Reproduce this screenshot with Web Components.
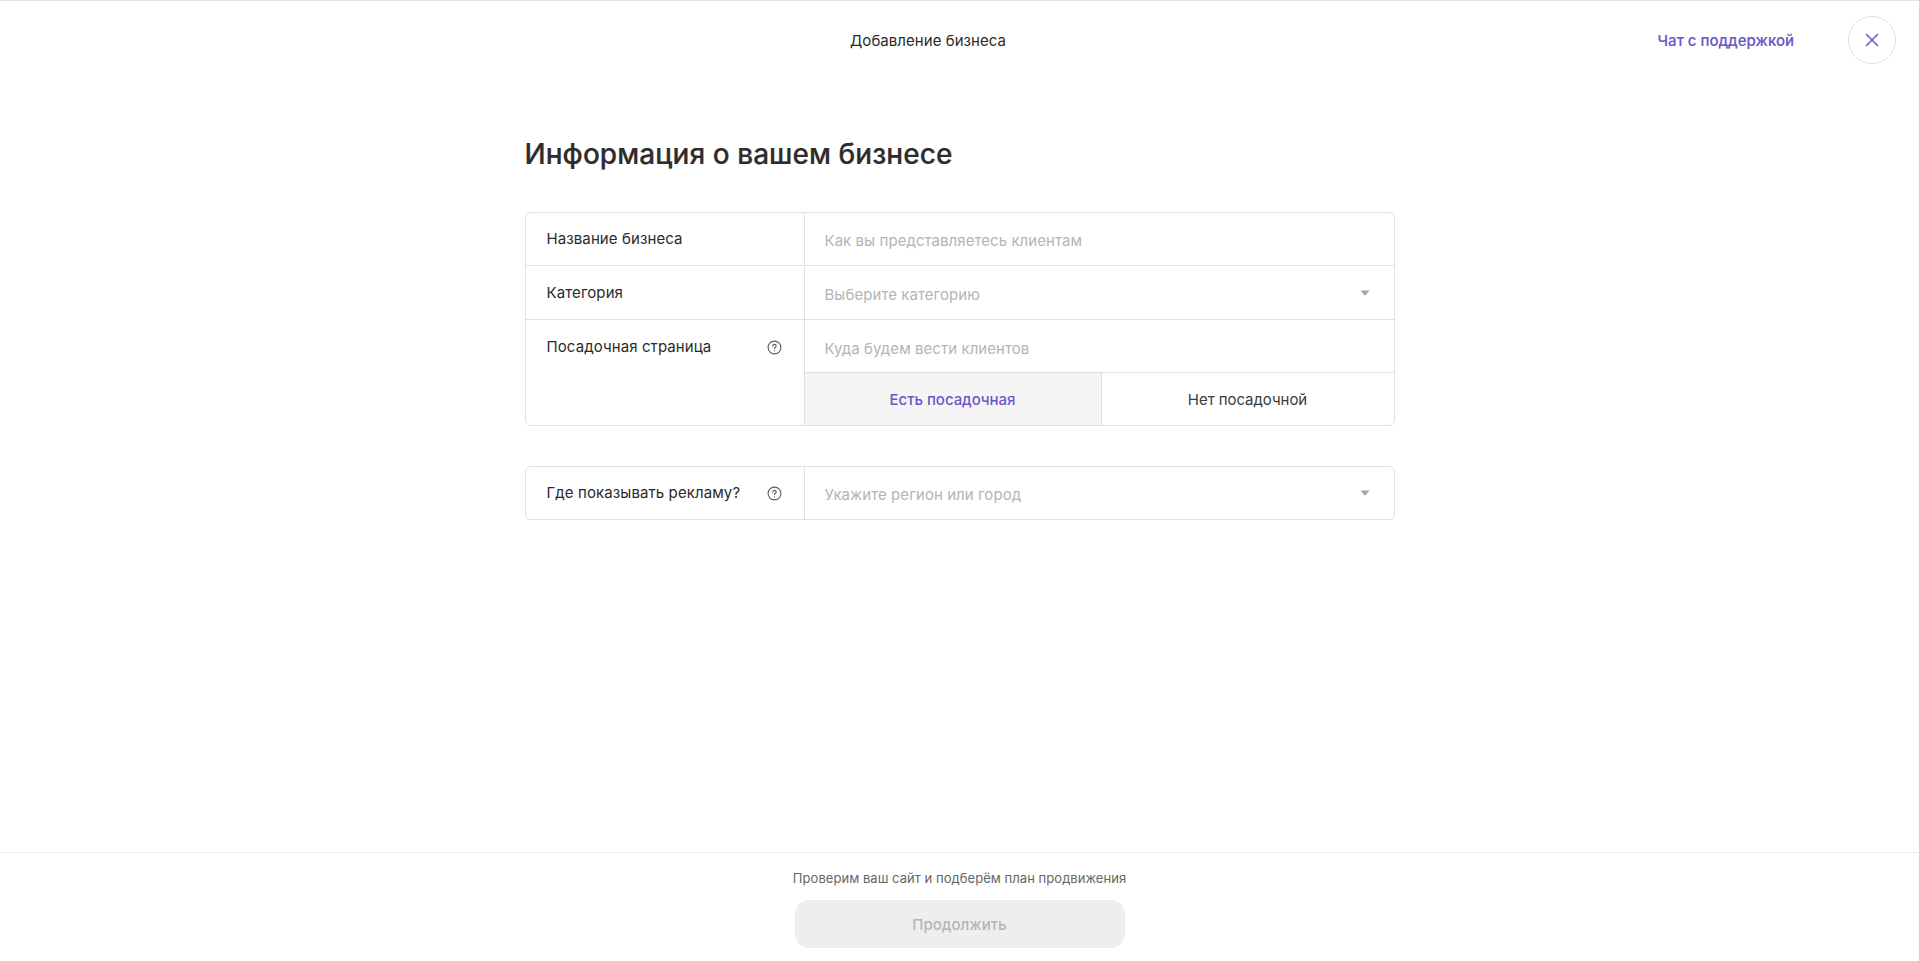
<!DOCTYPE html>
<html lang="ru">
<head>
<meta charset="utf-8">
<title>Добавление бизнеса</title>
<style>
  html, body { margin: 0; height: 100%; background: #fff; }
  body { font-family: Inter, "Noto Sans", sans-serif; color: #2b2a2a; }
  biz-page { height: 100vh; }
</style>
</head>
<body>
<biz-page>
  <biz-header slot="header" title-text="Добавление бизнеса" link-text="Чат с поддержкой"></biz-header>
  <h1 slot="heading">Информация о вашем бизнесе</h1>

  <biz-card>
    <biz-row label="Название бизнеса" placeholder="Как вы представляетесь клиентам"></biz-row>
    <biz-row label="Категория" placeholder="Выберите категорию" select></biz-row>
    <biz-row label="Посадочная страница" placeholder="Куда будем вести клиентов" help last>
      <biz-toggle first="Есть посадочная" second="Нет посадочной"></biz-toggle>
    </biz-row>
  </biz-card>

  <biz-card class="second">
    <biz-row label="Где показывать рекламу?" placeholder="Укажите регион или город" select help last></biz-row>
  </biz-card>

  <biz-footer slot="footer" note="Проверим ваш сайт и подберём план продвижения" action="Продолжить"></biz-footer>
</biz-page>

<script>
const HELP_ICON = `<svg width="15" height="15" viewBox="0 0 15 15" fill="none" stroke="#5c5c5c" stroke-width="1.1" stroke-linecap="round">
  <circle cx="7.5" cy="7.5" r="6.4"/>
  <path d="M5.8 6c0-1 .8-1.6 1.7-1.6s1.7.6 1.7 1.5c0 1.3-1.7 1.3-1.7 2.5"/>
  <path d="M7.5 10.6v.1"/>
</svg>`;

class BizPage extends HTMLElement {
  constructor() {
    super();
    this.attachShadow({ mode: 'open' });
    this.shadowRoot.innerHTML = `
      <style>
        :host { display: flex; flex-direction: column; box-sizing: border-box; border-top: 1px solid #e4e4e4; }
        main { flex: 1; width: 870px; margin: 0 auto; }
        ::slotted(h1) { margin: 71px 0 39px; font-size: 28px; letter-spacing: .05px; line-height: 38px; font-weight: 500; -webkit-text-stroke: .2px #2f2c2c; color: #2f2c2c; }
        ::slotted(biz-card.second) { margin-top: 40px; }
      </style>
      <slot name="header"></slot>
      <main>
        <slot name="heading"></slot>
        <slot></slot>
      </main>
      <slot name="footer"></slot>
    `;
  }
}

class BizHeader extends HTMLElement {
  constructor() {
    super();
    this.attachShadow({ mode: 'open' });
    this.shadowRoot.innerHTML = `
      <style>
        :host { display: flex; align-items: center; height: 48px; padding: 15px 23px 0 850px; }
        .title { font-size: 15px; letter-spacing: .05px; color: #2b2a2a; }
        a { margin-left: auto; font-size: 15px; font-weight: 500; -webkit-text-stroke: .15px #6b57c9; color: #6b57c9; text-decoration: none; }
        button { all: unset; box-sizing: border-box; width: 48px; height: 48px; margin-left: 54px; border: 1px solid #e2e2e2; border-radius: 50%; display: flex; align-items: center; justify-content: center; }
      </style>
      <span class="title"></span>
      <a href="#"></a>
      <button aria-label="Закрыть">
        <svg width="14" height="14" viewBox="0 0 14 14" fill="none" stroke="#6b57c9" stroke-width="1.5" stroke-linecap="round"><path d="M1.5 1.5l11 11M12.5 1.5l-11 11"/></svg>
      </button>
    `;
  }
  connectedCallback() {
    this.shadowRoot.querySelector('.title').textContent = this.getAttribute('title-text');
    this.shadowRoot.querySelector('a').textContent = this.getAttribute('link-text');
  }
}

class BizCard extends HTMLElement {
  constructor() {
    super();
    this.attachShadow({ mode: 'open' });
    this.shadowRoot.innerHTML = `
      <style>
        :host { display: block; box-sizing: border-box; border: 1px solid #e0e0e0; border-radius: 6px; overflow: hidden; }
      </style>
      <slot></slot>
    `;
  }
}

class BizRow extends HTMLElement {
  constructor() {
    super();
    this.attachShadow({ mode: 'open' });
    this.shadowRoot.innerHTML = `
      <style>
        :host { display: grid; grid-template-columns: 278px 1fr; font-size: 15px; }
        :host(:not([last])) { border-bottom: 1px solid #e0e0e0; }
        .label { display: flex; align-items: flex-start; justify-content: space-between; padding: 0 22px 0 21px; line-height: 52px; letter-spacing: .1px; color: #2b2a2a; }
        .label svg { margin-top: 19px; flex: none; }
        .value { border-left: 1px solid #e0e0e0; min-width: 0; }
        :host(:not(:first-child)) .value, :host(:not(:first-child)) .label { margin-top: 1px; }
        .field { display: flex; align-items: center; justify-content: space-between; height: 52px; padding: 0 24px 0 20px; letter-spacing: .06px; color: #b4b4b4; }
        :host([last]:not(:first-child)) .field { height: 51px; padding-top: 1px; box-sizing: border-box; }
        .field span { position: relative; top: 1px; }
      </style>
      <div class="label"><span class="text"></span></div>
      <div class="value">
        <div class="field"><span class="ph"></span></div>
        <slot></slot>
      </div>
    `;
  }
  connectedCallback() {
    const root = this.shadowRoot;
    root.querySelector('.text').textContent = this.getAttribute('label');
    root.querySelector('.ph').textContent = this.getAttribute('placeholder');
    if (this.hasAttribute('help')) root.querySelector('.label').insertAdjacentHTML('beforeend', HELP_ICON);
    if (this.hasAttribute('select')) {
      root.querySelector('.field').insertAdjacentHTML('beforeend',
        `<svg width="10" height="6" viewBox="0 0 10 6" fill="#a6a6a6"><path d="M.5 .5h9L5.6 5.2a.8.8 0 0 1-1.2 0z"/></svg>`);
    }
  }
}

class BizToggle extends HTMLElement {
  constructor() {
    super();
    this.attachShadow({ mode: 'open' });
    this.shadowRoot.innerHTML = `
      <style>
        :host { display: grid; grid-template-columns: 297px 1fr; height: 52px; border-top: 1px solid #e0e0e0; font-size: 15px; letter-spacing: -.05px; text-align: center; line-height: 54px; }
        .on { background: #f5f5f5; color: #6b57c9; font-weight: 500; border-right: 1px solid #e0e0e0; }
        .off { color: #3a3a3a; }
      </style>
      <div class="on"></div>
      <div class="off"></div>
    `;
  }
  connectedCallback() {
    this.shadowRoot.querySelector('.on').textContent = this.getAttribute('first');
    this.shadowRoot.querySelector('.off').textContent = this.getAttribute('second');
  }
}

class BizFooter extends HTMLElement {
  constructor() {
    super();
    this.attachShadow({ mode: 'open' });
    this.shadowRoot.innerHTML = `
      <style>
        :host { display: flex; flex-direction: column; align-items: center; height: 109px; box-sizing: border-box; border-top: 1px solid #ececec; }
        p { margin: 16px 0 13px; font-size: 13px; letter-spacing: .05px; line-height: 18px; color: #666; }
        button { all: unset; box-sizing: border-box; width: 330px; height: 48px; border-radius: 14px; background: #eee; color: #b5b5b5; font-size: 15px; font-weight: 500; text-align: center; line-height: 50px; }
      </style>
      <p></p>
      <button disabled></button>
    `;
  }
  connectedCallback() {
    this.shadowRoot.querySelector('p').textContent = this.getAttribute('note');
    this.shadowRoot.querySelector('button').textContent = this.getAttribute('action');
  }
}

customElements.define('biz-page', BizPage);
customElements.define('biz-header', BizHeader);
customElements.define('biz-card', BizCard);
customElements.define('biz-row', BizRow);
customElements.define('biz-toggle', BizToggle);
customElements.define('biz-footer', BizFooter);
</script>
</body>
</html>
